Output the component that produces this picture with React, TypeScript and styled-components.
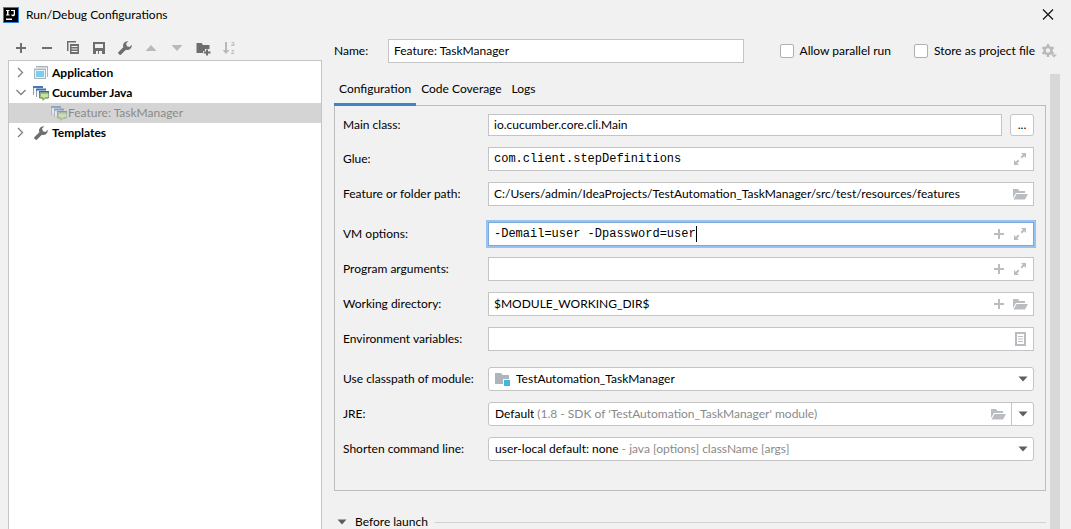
import React from "react";
import styled, { createGlobalStyle, css } from "styled-components";

const GlobalStyle = createGlobalStyle`
  * { box-sizing: border-box; }
  html, body, #root { height: 100%; }
  body { margin: 0; background: #f1f1f1; overflow: hidden; }
  body, input, button, select {
    font-family: Lato, "Segoe UI", sans-serif;
    font-size: 12px;
    line-height: 16px;
    color: #000;
  }
`;

const Dialog = styled.div`
  min-height: 100%;
  height: 100%;
  display: flex;
  flex-direction: column;
  background: #f1f1f1;
`;

const TitleBar = styled.header`
  display: flex;
  align-items: center;
  height: 30px;
  flex: none;
  padding: 0 15px 0 3px;
  gap: 7px;
`;

const Title = styled.h1`
  flex: 1;
  margin: 0;
  font-size: 12px;
  font-weight: 400;
`;

const IconButton = styled.button`
  display: flex;
  align-items: center;
  justify-content: center;
  width: 16px;
  height: 16px;
  flex: none;
  padding: 0;
  border: 0;
  background: none;
  color: #6e6e6e;
  &:disabled { color: #b9b9b9; }
`;

const Body = styled.div`
  flex: 1;
  min-height: 0;
  display: flex;
`;

const Sidebar = styled.aside`
  flex: 0 0 322px;
  padding-left: 8px;
  display: flex;
  flex-direction: column;
`;

const Toolbar = styled.div`
  display: flex;
  gap: 10px;
  padding: 10px 5px 4px;
`;

const Tree = styled.ul`
  flex: 1;
  margin: 0;
  padding: 2px 0;
  list-style: none;
  background: #fff;
  border: 1px solid #c4c4c4;
  border-bottom: 0;
`;

const TreeRow = styled.li<{ $level?: number; $selected?: boolean }>`
  display: flex;
  align-items: center;
  height: 20px;
  padding-left: ${(p) => (p.$level ? 42 : 4)}px;
  font-weight: ${(p) => (p.$level ? 400 : 700)};
  color: ${(p) => (p.$selected ? "#8a8a8a" : "#000")};
  background: ${(p) => (p.$selected ? "#d4d4d4" : "transparent")};
`;

const Chevron = styled.svg`
  width: 16px;
  height: 16px;
  margin-right: 4px;
  flex: none;
`;

const TreeIcon = styled.svg<{ $faded?: boolean }>`
  width: 16px;
  height: 16px;
  margin-right: ${(p) => (p.$faded ? 1 : 3)}px;
  flex: none;
  opacity: ${(p) => (p.$faded ? 0.5 : 1)};
`;

const Main = styled.main`
  flex: 1;
  min-width: 0;
  display: flex;
  flex-direction: column;
`;

const NameRow = styled.div`
  display: flex;
  align-items: center;
  height: 42px;
  flex: none;
  padding: 0 14px 0 12px;
`;

const NameLabel = styled.label`
  width: 54px;
`;

const Check = styled.label`
  display: flex;
  align-items: center;
  gap: 6px;
  white-space: nowrap;
`;

const CheckBox = styled.input`
  appearance: none;
  width: 14px;
  height: 14px;
  margin: 0;
  background: #fff;
  border: 1px solid #b0b0b0;
  border-radius: 2px;
`;

const NameChecks = styled.div`
  display: flex;
  align-items: center;
  margin: 0 6px 0 36px;
  gap: 23px;
`;

const Scroller = styled.div`
  flex: 1;
  min-height: 0;
  display: flex;
  padding: 2px 11px 0 12px;
`;

const Content = styled.div`
  flex: 1;
  min-width: 0;
`;

const ScrollTrack = styled.div`
  width: 10px;
  margin-left: 4px;
  background: #d8d8d8;
`;

const Tabs = styled.div`
  display: flex;
  height: 32px;
  position: relative;
`;

const Tab = styled.button<{ $active?: boolean }>`
  padding: 0 5px;
  border: 0;
  border-bottom: 3px solid ${(p) => (p.$active ? "#4083c9" : "transparent")};
  background: none;
`;

const Panel = styled.form`
  margin-top: -1px;
  padding: 8px 11px 29px 8px;
  border: 1px solid #bdbdbd;
  display: grid;
  gap: 16px;
`;

const Group = styled.div`
  display: grid;
  gap: 11px;
`;

const Row = styled.div`
  display: flex;
  align-items: center;
`;

const RowLabel = styled.label`
  flex: 0 0 145px;
  white-space: nowrap;
`;

const Field = styled.div<{ $focused?: boolean; $short?: boolean; $round?: boolean }>`
  flex: 1;
  min-width: 0;
  display: flex;
  align-items: center;
  height: ${(p) => (p.$short ? 22 : 24)}px;
  padding: 0 ${(p) => (p.$round ? 2 : 5)}px 0 5px;
  gap: 5px;
  background: #fff;
  border: 1px solid #c4c4c4;
  border-radius: ${(p) => (p.$round ? 3 : 0)}px;
  ${(p) =>
    p.$focused &&
    css`
      border-color: #7ba7db;
      box-shadow: 0 0 0 2px #97c3f3;
    `}
`;

const TextInput = styled.input<{ $mono?: boolean; $fit?: boolean }>`
  flex: ${(p) => (p.$fit ? "none" : 1)};
  min-width: 0;
  padding: 0;
  border: 0;
  outline: 0;
  background: none;
  ${(p) => p.$fit && css`field-sizing: content; caret-color: transparent;`}
  ${(p) => p.$mono && css`font-family: "Liberation Mono", "Courier New", monospace;`}
`;

const CaretHost = styled.div`
  flex: 1;
  min-width: 0;
  display: flex;
  align-items: center;
`;

const Caret = styled.span`
  width: 1px;
  height: 16px;
  background: #000;
`;

const Browse = styled.button`
  width: 24px;
  height: 22px;
  margin-left: 8px;
  padding: 0;
  background: #fff;
  border: 1px solid #c4c4c4;
  border-radius: 3px;
`;

const Picker = styled.select`
  appearance: none;
  field-sizing: content;
  margin-left: 1px;
  padding: 0;
  border: 0;
  outline: 0;
  background: none;
`;

const Hint = styled.span`
  flex: 1;
  min-width: 0;
  white-space: nowrap;
  overflow: hidden;
  color: #8a8a8a;
  margin-left: -2px;
`;

const Spacer = styled.span`
  flex: 1;
`;

const Divided = styled.span`
  display: flex;
  align-items: center;
  align-self: stretch;
  padding-left: 3px;
  border-left: 1px solid #c4c4c4;
`;

const Before = styled.div`
  display: flex;
  align-items: center;
  height: 16px;
  margin-top: 23px;
  gap: 5px;
`;

const Rule = styled.hr`
  flex: 1;
  margin: 0 0 0 2px;
  border: 0;
  border-top: 1px solid #d1d1d1;
`;

const Svg = ({ children }: { children: React.ReactNode }) => (
  <svg width="16" height="16" viewBox="0 0 16 16" aria-hidden="true">
    {children}
  </svg>
);

const WRENCH =
  "M14.800 4.800 12.600 7 9.900 6.300 9.100 3.500 11.300 1.300A4.500 4.500 0 0 0 6.300 7.300L1.300 12.300a.8.8 0 0 0 0 1.100l1.400 1.400a.8.8 0 0 0 1.100 0L8.900 9.700A4.500 4.500 0 0 0 14.800 4.800z";

const Arrow = () => (
  <Svg>
    <path d="M3.500 5.500h9L8 10.500z" fill="#5e5e5e" />
  </Svg>
);

const IconArea = ({ kind, label }: { kind: "plus" | "expand" | "folder" | "list"; label: string }) => (
  <IconButton type="button" aria-label={label}>
    <Svg>
      {kind === "plus" && <path d="M7 3h2v4h4v2H9v4H7V9H3V7h4z" fill="#b9bdc1" />}
      {kind === "expand" && (
        <g fill="#b9bdc1">
          <path d="M9 2h5v5l-1.800-1.800-2.200 2.200-1.400-1.400 2.200-2.200zM2 14V9l1.800 1.800L6 8.600 7.400 10l-2.200 2.200L7 14z" />
        </g>
      )}
      {kind === "folder" && (
        <path d="M1 12V3h5l1.500 2H13v2H4zM1.500 13.500 4.500 8H16l-3 5.500z" fill="#b9bdc1" />
      )}
      {kind === "list" && (
        <path
          d="M3 1h11v14H3zM5 3v10h7V3zM6 5h5v1H6zM6 7.500h5v1H6zM6 10h5v1H6z"
          fill="#b9bdc1"
          fillRule="evenodd"
        />
      )}
    </Svg>
  </IconButton>
);

const CucumberArt = () => (
  <>
    <path d="M.5 10V1.500h9V3" fill="#f4f8fc" stroke="#8ba0b8" />
    <path d="M0 1h10v2H0z" fill="#4a78b5" />
    <path d="M3.500 12V4.500h8" fill="#f4f8fc" stroke="#8ba0b8" />
    <path d="M3 3.500h10v2H3z" fill="#3f6fb0" />
    <path d="M6.500 13V6.500h9V13z" fill="#e9f0f8" stroke="#6a7f98" />
    <path d="M6 6h10v1.500H6z" fill="#2f5f9f" />
    <path d="M8.500 8h6a1.300 1.300 0 0 1 1.300 1.300v2.200a1.300 1.300 0 0 1-1.300 1.300H12.500l-2.500 2.500v-2.500H8.500a1.300 1.300 0 0 1-1.300-1.300V9.300A1.300 1.300 0 0 1 8.500 8z" fill="#c8e39a" stroke="#6d9a3c" />
  </>
);

export default function App() {
  return (
    <Dialog role="dialog" aria-label="Run/Debug Configurations">
      <GlobalStyle />
      <TitleBar>
        <Svg>
          <rect width="16" height="16" fill="#2b7de0" />
          <rect x="1" y="1" width="14" height="14" fill="#000" />
          <path d="M3 3h3.500v1H5.500v3.500h1v1H3v-1h1V4H3zM8 3h4v4a1.600 1.600 0 0 1-3.800.800l.9-.6c.6.9 1.600.5 1.600-.4V4H8zM3 11.500h6V13H3z" fill="#fff" />
        </Svg>
        <Title>Run/Debug Configurations</Title>
        <IconButton aria-label="Close">
          <Svg>
            <path d="M3 2.500 13 12.500M13 2.500 3 12.500" stroke="#111" strokeWidth="1.200" />
          </Svg>
        </IconButton>
      </TitleBar>
      <Body>
        <Sidebar>
          <Toolbar role="toolbar">
            <IconButton aria-label="Add">
              <Svg><path d="M7 3h2v4h4v2H9v4H7V9H3V7h4z" fill="currentColor" /></Svg>
            </IconButton>
            <IconButton aria-label="Remove">
              <Svg><path d="M3 7h10v2H3z" fill="currentColor" /></Svg>
            </IconButton>
            <IconButton aria-label="Copy">
              <Svg>
                <path d="M2 1h9v1.500H3.500V11H2zM5 4h9v10H5zM6.500 6v1h6V6zM6.500 8.500v1h6v-1zM6.500 11v1h6v-1z" fillRule="evenodd" fill="currentColor" />
              </Svg>
            </IconButton>
            <IconButton aria-label="Save">
              <Svg>
                <path d="M2 2h12v12H2zM4 4v4h8V4zM5 11v3h2v-3zM8 11v3h3v-3z" fillRule="evenodd" fill="currentColor" />
              </Svg>
            </IconButton>
            <IconButton aria-label="Edit templates">
              <Svg><path d={WRENCH} fill="currentColor" /></Svg>
            </IconButton>
            <IconButton aria-label="Move up" disabled>
              <Svg><path d="M2.500 11h11L8 5z" fill="currentColor" /></Svg>
            </IconButton>
            <IconButton aria-label="Move down" disabled>
              <Svg><path d="M2.500 5h11L8 11z" fill="currentColor" /></Svg>
            </IconButton>
            <IconButton aria-label="Create folder">
              <Svg>
                <path d="M1.500 3h5L8 5h6.500v4H10v2H8v2H1.500zM11 9.500h2v2h2.500v2H13v2h-2v-2H8.800v-2H11z" fill="currentColor" />
              </Svg>
            </IconButton>
            <IconButton aria-label="Sort" disabled>
              <Svg>
                <path d="M4 2h2v8h2.500L5 14 1.500 10H4z" fill="currentColor" />
                <text x="10" y="6" fontSize="7" fontWeight="700" fill="currentColor">a</text>
                <text x="10" y="14" fontSize="7" fontWeight="700" fill="currentColor">z</text>
              </Svg>
            </IconButton>
          </Toolbar>
          <Tree>
            <TreeRow>
              <Chevron viewBox="0 0 16 16"><path d="M5 3l4.500 4.500L5 12" fill="none" stroke="#808080" strokeWidth="1.300" /></Chevron>
              <TreeIcon viewBox="0 0 16 16">
                <path d="M3 1h12v11h-1V2.500H3z" fill="#a9b5bd" />
                <path d="M1 3.500h12V14H1z" fill="#a9b5bd" />
                <path d="M2 5h10v8H2z" fill="#e6f4fa" />
                <path d="M3 6h8v6H3z" fill="#7fcdec" />
              </TreeIcon>
              Application
            </TreeRow>
            <TreeRow>
              <Chevron viewBox="0 0 16 16"><path d="M3.500 5 8 9.500 12.500 5" fill="none" stroke="#808080" strokeWidth="1.300" /></Chevron>
              <TreeIcon viewBox="0 0 16 16"><CucumberArt /></TreeIcon>
              Cucumber Java
            </TreeRow>
            <TreeRow $level={1} $selected>
              <TreeIcon viewBox="0 0 16 16" $faded><CucumberArt /></TreeIcon>
              Feature: TaskManager
            </TreeRow>
            <TreeRow>
              <Chevron viewBox="0 0 16 16"><path d="M5 3l4.500 4.500L5 12" fill="none" stroke="#808080" strokeWidth="1.300" /></Chevron>
              <TreeIcon viewBox="0 0 16 16"><path d={WRENCH} fill="#6e6e6e" /></TreeIcon>
              Templates
            </TreeRow>
          </Tree>
        </Sidebar>
        <Main>
          <NameRow>
            <NameLabel htmlFor="name">Name:</NameLabel>
            <Field>
              <TextInput id="name" defaultValue="Feature: TaskManager" />
            </Field>
            <NameChecks>
              <Check><CheckBox type="checkbox" />Allow parallel run</Check>
              <Check><CheckBox type="checkbox" />Store as project file</Check>
            </NameChecks>
            <IconButton aria-label="Storage options">
              <Svg>
                <circle cx="7" cy="7.500" r="3.500" fill="none" stroke="#b9b9b9" strokeWidth="2.600" />
                <path d="M7 1v13M1.400 4.200l11.200 6.600M1.400 10.800 12.600 4.200" stroke="#b9b9b9" strokeWidth="2.400" />
                <circle cx="7" cy="7.500" r="2.200" fill="#f1f1f1" />
                <path d="M10 11.500h6l-3 3z" fill="#b9b9b9" />
              </Svg>
            </IconButton>
          </NameRow>
          <Scroller>
            <Content>
              <Tabs role="tablist">
                <Tab role="tab" $active aria-selected>Configuration</Tab>
                <Tab role="tab">Code Coverage</Tab>
                <Tab role="tab">Logs</Tab>
              </Tabs>
              <Panel>
                <Group>
                  <Row>
                    <RowLabel htmlFor="main">Main class:</RowLabel>
                    <Field $short><TextInput id="main" defaultValue="io.cucumber.core.cli.Main" /></Field>
                    <Browse type="button">...</Browse>
                  </Row>
                  <Row>
                    <RowLabel htmlFor="glue">Glue:</RowLabel>
                    <Field>
                      <TextInput id="glue" $mono defaultValue="com.client.stepDefinitions" />
                      <IconArea kind="expand" label="Expand" />
                    </Field>
                  </Row>
                  <Row>
                    <RowLabel htmlFor="path">Feature or folder path:</RowLabel>
                    <Field>
                      <TextInput id="path" defaultValue="C:/Users/admin/IdeaProjects/TestAutomation_TaskManager/src/test/resources/features" />
                      <IconArea kind="folder" label="Browse" />
                    </Field>
                  </Row>
                </Group>
                <Group>
                  <Row>
                    <RowLabel htmlFor="vm">VM options:</RowLabel>
                    <Field $focused>
                      <CaretHost>
                        <TextInput id="vm" $mono $fit defaultValue="-Demail=user -Dpassword=user" />
                        <Caret />
                      </CaretHost>
                      <IconArea kind="plus" label="Insert macro" />
                      <IconArea kind="expand" label="Expand" />
                    </Field>
                  </Row>
                  <Row>
                    <RowLabel htmlFor="args">Program arguments:</RowLabel>
                    <Field>
                      <TextInput id="args" $mono />
                      <IconArea kind="plus" label="Insert macro" />
                      <IconArea kind="expand" label="Expand" />
                    </Field>
                  </Row>
                  <Row>
                    <RowLabel htmlFor="dir">Working directory:</RowLabel>
                    <Field>
                      <TextInput id="dir" defaultValue="$MODULE_WORKING_DIR$" />
                      <IconArea kind="plus" label="Insert macro" />
                      <IconArea kind="folder" label="Browse" />
                    </Field>
                  </Row>
                  <Row>
                    <RowLabel htmlFor="env">Environment variables:</RowLabel>
                    <Field>
                      <TextInput id="env" />
                      <IconArea kind="list" label="Edit variables" />
                    </Field>
                  </Row>
                </Group>
                <Group>
                  <Row>
                    <RowLabel htmlFor="module">Use classpath of module:</RowLabel>
                    <Field $round>
                      <Svg>
                        <path d="M1 2h6l1.500 2H15v4H9v5H1z" fill="#aeb5ba" />
                        <path d="M10 9h6v6h-6z" fill="#40b6e0" />
                      </Svg>
                      <Picker id="module"><option>TestAutomation_TaskManager</option></Picker>
                      <Spacer />
                      <Arrow />
                    </Field>
                  </Row>
                  <Row>
                    <RowLabel htmlFor="jre">JRE:</RowLabel>
                    <Field $round>
                      <Picker id="jre"><option>Default</option></Picker>
                      <Hint>(1.8 - SDK of 'TestAutomation_TaskManager' module)</Hint>
                      <IconArea kind="folder" label="Browse" />
                      <Divided><Arrow /></Divided>
                    </Field>
                  </Row>
                  <Row>
                    <RowLabel htmlFor="shorten">Shorten command line:</RowLabel>
                    <Field $round>
                      <Picker id="shorten"><option>user-local default: none</option></Picker>
                      <Hint>- java [options] className [args]</Hint>
                      <Arrow />
                    </Field>
                  </Row>
                </Group>
              </Panel>
              <Before>
                <Arrow />
                <span>Before launch</span>
                <Rule />
              </Before>
            </Content>
            <ScrollTrack />
          </Scroller>
        </Main>
      </Body>
    </Dialog>
  );
}
